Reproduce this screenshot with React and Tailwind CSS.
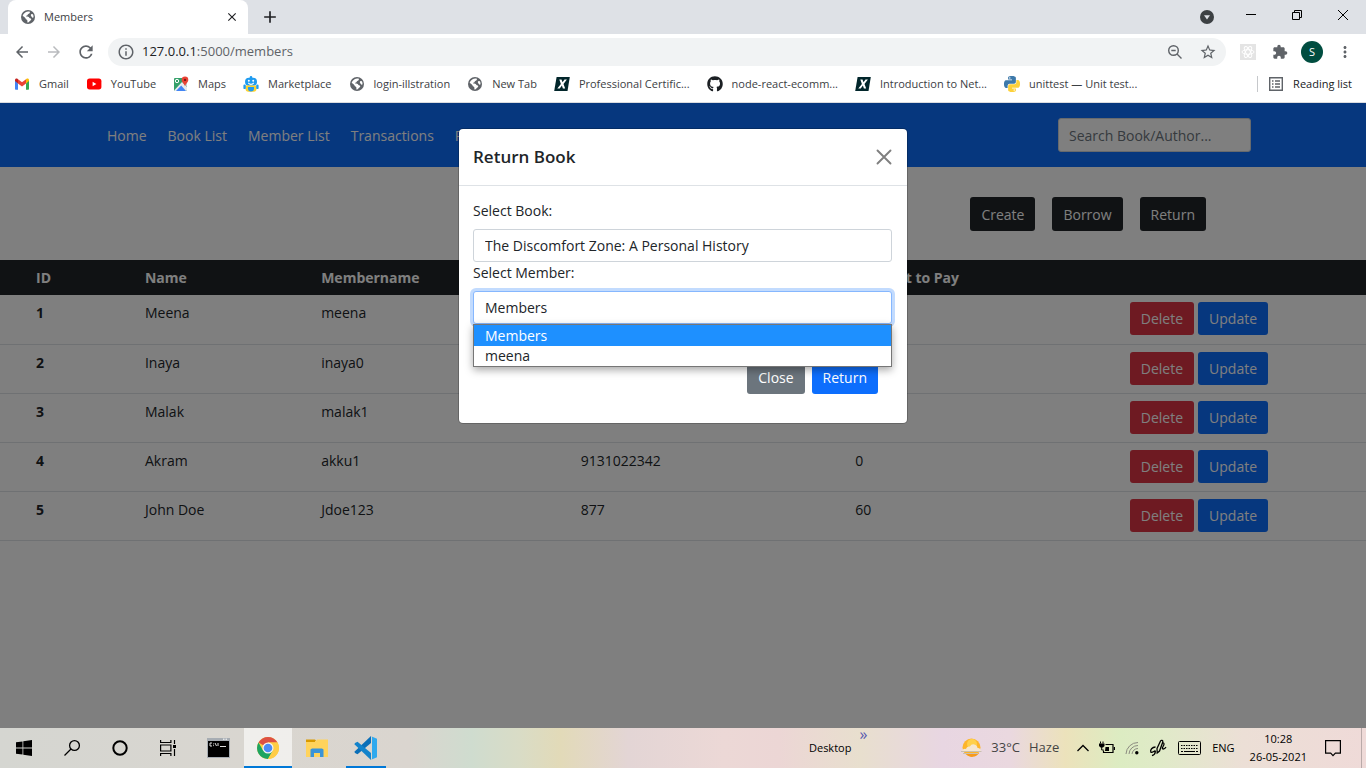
import {
  MdArrowBack, MdArrowForward, MdRefresh, MdInfoOutline, MdStarBorder,
  MdExtension, MdMoreVert, MdClose, MdAdd,
} from "react-icons/md";
import { FaGithub } from "react-icons/fa";

const members = [
  { id: 1, name: "Meena", user: "meena", phone: "", due: "" },
  { id: 2, name: "Inaya", user: "inaya0", phone: "", due: "" },
  { id: 3, name: "Malak", user: "malak1", phone: "", due: "" },
  { id: 4, name: "Akram", user: "akku1", phone: "9131022342", due: "0" },
  { id: 5, name: "John Doe", user: "Jdoe123", phone: "877", due: "60" },
];

function Globe() {
  return (
    <svg viewBox="0 0 16 16" className="size-4">
      <circle cx="8" cy="8" r="7" fill="#5f6368" />
      <path d="M9.600 2.600C10.300 3.600 9.800 4.700 8.300 5c-.6.100-.5 1-.9 1.300-.5.400-1.400.3-1.300 1 .1.500 1 .3 2 .4 1.200.1 1 1.300 1.900 1.500 1 .2 1.500.6 1.100 1.500-.5 1-1.300 1-1.700 1.900-.3.700-.9 1-1.600 1-.5 0-.5-.5-.4-1.200.1-.9-.2-1.400-.9-1.800-1-.6-.9-1.600-1.700-2.200-.7-.6-1.500-.8-2.200-1.300A6 6 0 0 1 9.600 2.600z" fill="#fff" />
      <path d="M11.300 5.200c.9-.4 1.500-.2 1.900.6.400 1 .4 2 .2 2.800-.8.200-1.300-.1-1.800-.9-.6-.8-1.200-1.900-.3-2.500z" fill="#fff" />
    </svg>
  );
}
function Gmail() {
  return (
    <svg viewBox="0 0 16 16" className="size-4">
      <path d="M1 3.5V13a.8.8 0 0 0 .8.8H4V7.2z" fill="#4285f4" />
      <path d="M15 3.5V13a.8.8 0 0 1-.8.8H12V7.2z" fill="#34a853" />
      <path d="M4 3.2 8 6.3l4-3.100v4.2L8 10.5 4 7.4z" fill="#ea4335" />
      <path d="M1 4.900V4c0-1.500 1.500-2 2.500-1.200l.5.4v4.2z" fill="#c5221f" />
      <path d="M15 4.900V4c0-1.500-1.500-2-2.500-1.200l-.5.4v4.2z" fill="#fbbc04" />
    </svg>
  );
}
function YouTube() {
  return (
    <svg viewBox="0 0 16 16" className="size-4">
      <rect x="1" y="2.6" width="14.4" height="10.8" rx="2.6" fill="#f00" />
      <path d="M6.6 5.8v4.4L10.4 8z" fill="#fff" />
    </svg>
  );
}
function Maps() {
  return (
    <svg viewBox="0 0 16 16" className="size-4">
      <rect x="1" y="2" width="13" height="13" rx="1" fill="#34a06a" />
      <path d="M1 14.5 9 6l5 5v3.2l-.8.8H2z" fill="#e8eaed" />
      <path d="M3 15l5.200-5.500L13 15z" fill="#4285f4" />
      <path d="M9 6l5-3v8z" fill="#c8cdd4" />
      <circle cx="4" cy="5" r="1.700" fill="none" stroke="#fff" strokeWidth="1" />
      <path d="M12 .6a3.3 3.3 0 0 0-3.3 3.3c0 2.400 2.600 3.300 3.300 6.400.7-3.100 3.300-4 3.300-6.400A3.3 3.3 0 0 0 12 .6z" fill="#ea4335" />
      <circle cx="12" cy="3.900" r="1.200" fill="#7c1a14" />
    </svg>
  );
}
function Robot() {
  return (
    <svg viewBox="0 0 16 16" className="size-4">
      <circle cx="8" cy="1.400" r="1.300" fill="#1e9bf0" />
      <rect x="2" y="1.800" width="12" height="8" rx="4" fill="#1e9bf0" />
      <path d="M2.500 9.500h11v3.300a3 3 0 0 1-3 3h-5a3 3 0 0 1-3-3z" fill="#fdd22f" />
      <rect x=".4" y="8.500" width="2.400" height="4.600" rx="1.200" fill="#1e9bf0" />
      <rect x="13.200" y="8.500" width="2.400" height="4.600" rx="1.200" fill="#1e9bf0" />
      <path d="M5 11h6v1.500a3 3 0 0 1-6 0z" fill="#1e9bf0" />
      <circle cx="5.800" cy="4.800" r="1" fill="#fff" />
      <circle cx="10.200" cy="4.800" r="1" fill="#fff" />
      <path d="M5.300 6.900c1.500 1.900 3.900 1.900 5.400 0" stroke="#fff" strokeWidth="1.100" fill="none" />
    </svg>
  );
}
function XMark() {
  return (
    <svg viewBox="0 0 16 16" className="size-4">
      <path d="M2.600 1h13.200l-2.300 14H.2z" fill="#02262b" />
      <path d="M5.300 3.400h2.200l1 2.900 2-2.900h2.400L9.500 8l1.700 4.600H8.900l-1-3-2.200 3H3.300L6.900 8z" fill="#fff" />
    </svg>
  );
}
function Python() {
  const half =
    "M14.25.18l.9.2.73.26.59.3.45.32.34.34.25.34.16.33.1.3.04.26.02.2-.01.13V8.5l-.05.63-.13.55-.21.46-.26.38-.3.31-.33.25-.35.19-.35.14-.33.1-.3.07-.26.04-.21.02H8.77l-.69.05-.59.14-.5.22-.41.27-.33.32-.27.35-.2.36-.15.37-.1.35-.07.32-.04.27-.02.21v3.06H3.17l-.21-.03-.28-.07-.32-.12-.35-.18-.36-.26-.36-.36-.35-.46-.32-.59-.28-.73-.21-.88-.14-1.05-.05-1.23.06-1.22.16-1.04.24-.87.32-.71.36-.57.4-.44.42-.33.42-.24.4-.16.36-.1.32-.05.24-.01h.16l.06.01h8.16v-.83H6.18l-.01-2.75-.02-.37.05-.34.11-.31.17-.28.25-.26.31-.23.38-.2.44-.18.51-.15.58-.12.64-.1.71-.06.77-.04.84-.02 1.27.05zm-6.3 1.98l-.23.33-.08.41.08.41.23.34.33.22.41.09.41-.09.33-.22.23-.34.08-.41-.08-.41-.23-.33-.33-.22-.41-.09-.41.09z";
  return (
    <svg viewBox="0 0 24 24" className="size-4">
      <path d={half} fill="#3d79aa" />
      <path d={half} fill="#fdd13a" transform="rotate(180 12 12)" />
    </svg>
  );
}

const bookmarks = [
  ["Gmail", <Gmail />],
  ["YouTube", <YouTube />],
  ["Maps", <Maps />],
  ["Marketplace", <Robot />],
  ["login-illstration", <Globe />],
  ["New Tab", <Globe />],
  ["Professional Certific...", <XMark />],
  ["node-react-ecomm...", <FaGithub className="size-4 text-[#1b1f23]" />],
  ["Introduction to Net...", <XMark />],
  ["unittest — Unit test...", <Python />],
];

function BrowserChrome() {
  return (
    <header className="text-[11px] text-[#3c4043]">
      <div className="flex h-[34px] items-start bg-[#dee1e6] pl-2">
        <div className="flex h-full w-60 items-center rounded-t-lg bg-white pr-[9px] pl-3">
          <Globe />
          <span className="ml-2 flex-1">Members</span>
          <button aria-label="Close tab"><MdClose className="size-[14px] text-[#202124]" /></button>
        </div>
        <button aria-label="New tab" className="ml-3 flex h-full items-center"><MdAdd className="size-5 text-[#202124]" /></button>
        <div className="ml-auto flex h-[30px] items-center text-black">
          <button aria-label="Search tabs" className="mr-[31px] pt-1">
            <svg viewBox="0 0 14 14" className="size-[14px]">
              <circle cx="7" cy="7" r="7" fill="#3c4043" />
              <path d="M4 5.200h6L7 9.600z" fill="#dee1e6" />
            </svg>
          </button>
          <button aria-label="Minimize" className="mr-[34px]">
            <svg viewBox="0 0 12 12" className="size-3"><path d="M1 5.500h10" stroke="currentColor" /></svg>
          </button>
          <button aria-label="Restore" className="mr-[34px]">
            <svg viewBox="0 0 12 12" className="size-3" fill="none" stroke="currentColor"><path d="M1.500 3.500h7v7h-7zM3.500 3.500v-2h7v7h-2" /></svg>
          </button>
          <button aria-label="Close" className="mr-[17px]">
            <svg viewBox="0 0 12 12" className="size-3" fill="none" stroke="currentColor"><path d="M1 1l10 10M11 1 1 11" /></svg>
          </button>
        </div>
      </div>

      <div className="flex h-9 items-center bg-white pr-3 pl-[13px] text-[#5f6368]">
        <button aria-label="Back"><MdArrowBack className="size-[18px]" /></button>
        <button aria-label="Forward" className="ml-[14px]"><MdArrowForward className="size-[18px] text-[#b9bbbe]" /></button>
        <button aria-label="Reload" className="ml-[13px]"><MdRefresh className="size-5" /></button>
        <div className="ml-3 flex h-7 flex-1 items-center rounded-full bg-[#f1f3f4] px-[9px]">
          <MdInfoOutline className="size-[18px]" />
          <span className="ml-[7px] flex-1 text-[13px]"><span className="text-[#202124]">127.0.0.1</span>:5000/members</span>
          <svg viewBox="0 0 16 16" className="mr-4 size-4" fill="none" stroke="currentColor" strokeWidth="1.400"><circle cx="6.500" cy="6.500" r="4.800" /><path d="M10 10l4.500 4.500M4.300 6.500h4.400" /></svg>
          <MdStarBorder className="size-[18px]" />
        </div>
        <svg viewBox="0 0 16 16" className="ml-[14px] size-4" fill="none" stroke="#fff">
          <path d="M0 0h16v16H0z" fill="#e4e4e4" stroke="none" />
          <ellipse cx="8" cy="8" rx="6" ry="2.300" /><ellipse cx="8" cy="8" rx="6" ry="2.300" transform="rotate(60 8 8)" /><ellipse cx="8" cy="8" rx="6" ry="2.300" transform="rotate(120 8 8)" />
        </svg>
        <MdExtension className="ml-4 size-4" />
        <button aria-label="Profile" className="ml-[13px] flex size-[22px] items-center justify-center rounded-full bg-[#004d40] text-[11px] text-white">S</button>
        <button aria-label="More" className="ml-[13px]"><MdMoreVert className="size-[18px]" /></button>
      </div>

      <nav className="flex h-[33px] items-center gap-[17px] border-b border-[#dadce0] bg-white pr-[14px] pb-1 pl-[14px]">
        {bookmarks.map(([label, icon]) => (
          <a key={label} href="#" className="flex items-center gap-[9px] whitespace-nowrap">{icon}{label}</a>
        ))}
        <span className="ml-auto flex h-4 items-center border-l border-[#c6c8cb]" />
        <a href="#" className="-ml-[7px] flex items-center gap-[9px] whitespace-nowrap text-[#202124]">
          <svg viewBox="0 0 16 16" className="size-4" fill="none" stroke="#5f6368" strokeWidth="1.400"><path d="M1.700 1.700h12.600v12.600H1.700z" /><path d="M4 5h1.500M4 8h1.500M4 11h1.500M7 5h5M7 8h5M7 11h5" /></svg>
          Reading list
        </a>
      </nav>
    </header>
  );
}

function MembersPage() {
  const dark = "h-[34px] rounded-[3px] bg-[#212529] px-[11px] text-white";
  return (
    <div className="text-[#212529]">
      <nav className="flex h-16 items-center bg-[#0d6efd] pr-[115px] pl-[107px]">
        <div className="flex gap-[21px] text-white">
          <a href="#">Home</a>
          <a href="#">Book List</a>
          <a href="#">Member List</a>
          <a href="#">Transactions</a>
          <a href="#">Reports</a>
        </div>
        <input aria-label="Search" placeholder="Search Book/Author..." className="ml-auto h-[34px] w-[193px] rounded-[3px] border border-[#ced4da] bg-white px-[10px] placeholder:text-[#6c757d]" />
      </nav>
      <div className="flex justify-end gap-[17px] pt-[30px] pr-40 pb-[29px]">
        <button className={dark}>Create</button>
        <button className={dark}>Borrow</button>
        <button className={dark}>Return</button>
      </div>
      <table className="w-full table-fixed border-collapse text-left">
        <thead>
          <tr className="h-[35px] bg-[#212529] text-white">
            <th className="w-[10.100%] pl-9">ID</th>
            <th className="w-[12.900%] px-[7px]">Name</th>
            <th className="w-[19%] px-[7px]">Membername</th>
            <th className="w-[20.100%] px-[7px]">Phone</th>
            <th className="w-[20.100%] px-[7px]">Amount to Pay</th>
            <th />
          </tr>
        </thead>
        <tbody>
          {members.map((m) => (
            <tr key={m.id} className="h-[49px] border-b border-[#dee2e6] align-top">
              <th className="pt-[7px] pl-9">{m.id}</th>
              <td className="px-[7px] pt-[7px]">{m.name}</td>
              <td className="px-[7px] pt-[7px]">{m.user}</td>
              <td className="px-[7px] pt-[7px]">{m.phone}</td>
              <td className="px-[7px] pt-[7px]">{m.due}</td>
              <td className="px-[7px] pt-[7px]">
                <div className="flex gap-1 text-white">
                  <button className="h-[33px] rounded-[3px] bg-[#dc3545] px-[11px]">Delete</button>
                  <button className="h-[33px] rounded-[3px] bg-[#0d6efd] px-[11px]">Update</button>
                </div>
              </td>
            </tr>
          ))}
        </tbody>
      </table>
    </div>
  );
}

function ReturnDialog() {
  return (
    <div className="absolute inset-0 flex items-start justify-center bg-black/50 pt-[26px]">
      <div role="dialog" aria-labelledby="dialog-title" className="w-[448px] rounded bg-white text-[#212529] shadow-[0_0_0_1px_rgba(0,0,0,0.2)]">
        <div className="flex h-[57px] items-center justify-between border-b border-[#dee2e6] pr-[15px] pl-[14px]">
          <h5 id="dialog-title" className="text-[17px] font-semibold">Return Book</h5>
          <button aria-label="Close dialog">
            <svg viewBox="0 0 16 16" className="size-4" stroke="#7f7f7f" strokeWidth="1.900" strokeLinecap="round"><path d="M1.500 1.500l13 13M14.500 1.500l-13 13" /></svg>
          </button>
        </div>
        <form className="pt-[14px] pr-[15px] pb-[29px] pl-[14px]">
          <label htmlFor="book" className="mb-[7px] block leading-[22px]">Select Book:</label>
          <select id="book" className="block h-[33px] w-full appearance-none rounded-[3px] border border-[#ced4da] bg-white px-[11px]">
            <option>The Discomfort Zone: A Personal History</option>
          </select>
          <label htmlFor="member" className="mb-[7px] block leading-[22px]">Select Member:</label>
          <div className="relative">
            <select id="member" className="block h-[33px] w-full appearance-none rounded-[3px] border border-[#86b7fe] bg-white px-[11px] ring-3 ring-[#c2dbfe]">
              <option>Members</option>
              <option>meena</option>
            </select>
            <ul role="listbox" aria-label="Members" className="absolute inset-x-0 top-full border border-[#767676] bg-white leading-5 shadow-[0_3px_8px_rgba(0,0,0,0.35)]">
              <li role="option" aria-selected="true" className="bg-[#1e90ff] px-[11px] pt-px text-white">Members</li>
              <li role="option" aria-selected="false" className="px-[11px]">meena</li>
            </ul>
          </div>
          <div className="mt-[37px] flex justify-end gap-[7px] pr-[14px] text-white">
            <button type="button" className="h-[33px] rounded-[3px] bg-[#6c757d] px-[11px]">Close</button>
            <button type="button" className="h-[33px] rounded-[3px] bg-[#0d6efd] px-[11px]">Return</button>
          </div>
        </form>
      </div>
    </div>
  );
}

function Taskbar() {
  const tile = "flex h-10 w-12 items-center justify-center";
  return (
    <footer className="flex h-10 items-center bg-[linear-gradient(90deg,#d5d6d1_0%,#d9d6d0_18%,#dad5cf_30%,#cfdccf_34.500%,#d9dcc6_38%,#e2dab8_41%,#e3d5d5_46%,#ecd8d6_53%,#ecd6d5_57%,#e8dfce_63%,#e8d6e2_69%,#ead8df_74%,#ece2bb_78%,#dcecc2_82%,#e0eac8_85%,#ecdfd6_91%,#efdad8_100%)] text-[11px] text-black">
      <button aria-label="Start" className={tile}>
        <svg viewBox="0 0 16 16" className="size-4"><path d="M0 2.300 6.500 1.400v6.200H0zM7.300 1.300 16 0v7.600H7.300zM0 8.400h6.500v6.200L0 13.700zM7.300 8.400H16V16l-8.700-1.300z" /></svg>
      </button>
      <button aria-label="Search" className={tile}>
        <svg viewBox="0 0 18 18" className="size-[18px]" fill="none" stroke="#000" strokeWidth="1.300"><circle cx="11.500" cy="6.500" r="4.900" /><path d="M8 10 1.500 16.500" /></svg>
      </button>
      <button aria-label="Cortana" className={tile}>
        <svg viewBox="0 0 16 16" className="size-4" fill="none" stroke="#000" strokeWidth="2"><circle cx="8" cy="8" r="6.700" /></svg>
      </button>
      <button aria-label="Task view" className={tile}>
        <svg viewBox="0 0 16 16" className="size-4" fill="none" stroke="#000" strokeWidth="1.200"><path d="M.6 0v2.500h10.300V0M.6 16v-2.500h10.300V16M.6 5h10.300v6H.6zM14.500 0v4M14.500 9v7" /><path d="M13 5h3v3h-3z" fill="#000" stroke="none" /></svg>
      </button>
      <button aria-label="Command Prompt" className={`${tile} ml-[2px]`}>
        <svg viewBox="0 0 23 20" className="h-5 w-[23px]">
          <path d="M0 0h23v20H0z" fill="#a7adb3" /><path d="M1 3h21v16H1z" fill="#000" /><path d="M16 1.200h1.500M18.500 1.200H20" stroke="#fff" />
          <path d="M5 5H3v3h2M6.500 5.500v.8M6.500 7.300v.8M8 5l1.500 3M11 5v3M13 8.500h6" stroke="#ddd" fill="none" />
        </svg>
      </button>
      <button aria-label="Chrome" className="ml-[2px] flex h-10 w-12 items-center justify-center border-b-2 border-[#0078d7] bg-white/60 pt-[2px]">
        <svg viewBox="0 0 24 24" className="size-6">
          <circle cx="12" cy="12" r="11" fill="#fc4" />
          <path d="M12 12 2.500 6.500A11 11 0 0 1 21.500 6.500H12z" fill="#dd5144" />
          <path d="M2.500 6.500A11 11 0 0 0 12 23l4.800-8.300L12 12 7.200 14.700z" fill="#1da462" />
          <path d="M21.500 6.500H12v5.500l4.800 2.700L12 23A11 11 0 0 0 21.500 6.500z" fill="#ffcd46" />
          <circle cx="12" cy="12" r="5.500" fill="#f4f4f4" /><circle cx="12" cy="12" r="4.300" fill="#4c8bf5" />
        </svg>
      </button>
      <button aria-label="File Explorer" className={`${tile} ml-px`}>
        <svg viewBox="0 0 22 20" className="h-5 w-[22px]">
          <path d="M0 1.500h9l1.500 2H0z" fill="#d99a00" /><path d="M0 3.500 10 3l1-1.500h11V19H0z" fill="#ffd35c" /><path d="M0 2h9v2H0z" fill="#d99a00" />
          <path d="M4.500 19v-7.500l1.500-1h10l1.500 1V19H14v-4H8v4z" fill="#3a94d8" />
        </svg>
      </button>
      <button aria-label="Visual Studio Code" className={`${tile} ml-px`}>
        <span className="flex h-10 w-10 items-center justify-center border-b-2 border-[#0078d7] pt-[2px]">
          <svg viewBox="0 0 24 24" className="size-6">
            <path d="M17 0v7L3.500 18.300 1 17.100.4 15.800z" fill="#0a6fb8" />
            <path d="M17 24v-7L3.500 5.700 1 6.900.4 8.200z" fill="#1283cb" />
            <path d="M16.500 0 23 2.700v18.600L16.500 24c.8-.2 1.500-.8 1.500-1.600V1.600C18 .8 17.300.2 16.500 0z" fill="#2fa9ee" />
          </svg>
        </span>
      </button>

      <div className="ml-auto flex h-full items-center">
        <span>Desktop</span>
        <span className="ml-2 self-start text-[16px] leading-3 text-[#5a5ab0]">»</span>
        <svg viewBox="0 0 21 20" className="ml-[94px] h-5 w-[21px]">
          <circle cx="10.500" cy="9.500" r="9" fill="#fdb52a" /><circle cx="11" cy="6" r="5" fill="#ffd04a" /><path d="M4 15h14a8 8 0 0 1-13 1z" fill="#f79a1c" />
          <path d="M1 13.800h18.500a2.800 2.800 0 0 0-3-3.800 4 4 0 0 0-7.600-1.400A3 3 0 0 0 5 11a3 3 0 0 0-4 2.800z" fill="#f5e6cf" /><path d="M0 13.500h20.500M2 15.500h15" stroke="#c9bfb0" />
        </svg>
        <span className="ml-[9px] text-[13px] text-[#444]">33°C</span>
        <span className="ml-[9px] text-[13px] text-[#444]">Haze</span>
        <svg viewBox="0 0 12 8" className="ml-[18px] h-2 w-3" fill="none" stroke="#000" strokeWidth="1.300"><path d="M.5 7 6 1.500 11.500 7" /></svg>
        <svg viewBox="0 0 16 14" className="ml-[10px] h-[14px] w-4" fill="none" stroke="#000"><path d="M6.500 3.500h7.500v8H4.500V9.500M15.500 6v3" strokeWidth="1.200" /><path d="M6.500 6H10v4H6z" fill="#000" stroke="none" /><path d="M0 2.500h5.500V5L4 6.500H1.500L0 5z" fill="#000" stroke="none" /><path d="M1.500 2.500V.5M4 2.500V.5M2.700 6v3h2" /></svg>
        <svg viewBox="0 0 14 14" className="ml-[10px] size-[14px]" fill="none" stroke="#8b8b80"><path d="M1 13A12 12 0 0 1 13 1.500M4 13a9 9 0 0 1 9-8.500M7 13a6 6 0 0 1 6-5.500" /><circle cx="11.800" cy="11.800" r="1.700" fill="#000" stroke="none" /></svg>
        <svg viewBox="0 0 18 18" className="ml-[10px] size-[18px]" fill="none" stroke="#000" strokeWidth="1.300"><path d="M8 9.500 11.500 2c.8-1.200 2.600-.6 2.300 1L10.500 12l-2.300 2zM6.500 8C3 8 1 11 1.800 13c1.300 1.600 4.600-2.500 4.500-.6 0 2.300-1.300 3.600-3.300 4.300M13.800 3.500c1.500.5 1.500 2 .5 3.500s-1.300 3 0 3 2-.8 2.700-1.800" /></svg>
        <svg viewBox="0 0 23 14" className="ml-[11px] h-[14px] w-[23px]" fill="none" stroke="#000"><rect x=".5" y=".5" width="22" height="13" rx="1" /><path d="M3 4.500h17M3 7.500h17" strokeDasharray="1.500 1" /><path d="M3 10.500h2M6 10.500h11M18 10.500h2" /></svg>
        <span className="ml-[11px]">ENG</span>
        <div className="ml-[15px] text-center leading-[18px]"><div>10:28</div><div>26-05-2021</div></div>
        <svg viewBox="0 0 16 17" className="ml-[18px] h-[17px] w-4" fill="none" stroke="#000" strokeWidth="1.200"><path d="M.6.600h14.800v12.500h-5L8 15.600l-2.300-2.500H.6z" /></svg>
        <span className="ml-5 h-full w-[5px] border-l border-[#b9aaa9]" />
      </div>
    </footer>
  );
}

export default function App() {
  return (
    <div className="flex min-h-screen flex-col bg-white font-['Open_Sans',sans-serif] text-[14px]">
      <BrowserChrome />
      <main className="relative flex-1">
        <MembersPage />
        <ReturnDialog />
      </main>
      <Taskbar />
    </div>
  );
}
